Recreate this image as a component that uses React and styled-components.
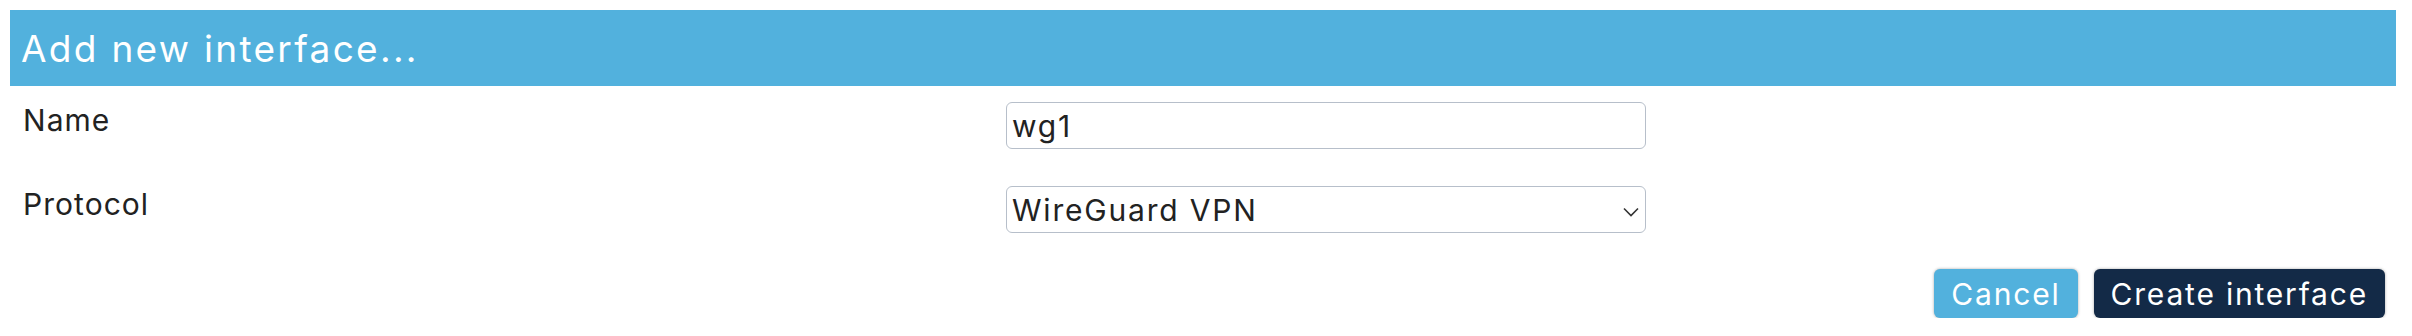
import React from "react";
import styled, { createGlobalStyle } from "styled-components";

const GlobalStyle = createGlobalStyle`
  body {
    margin: 0;
    background: #fff;
    font-family: Inter, "Noto Sans", sans-serif;
    color: #222;
    letter-spacing: 0.065em;
  }
`;

const Page = styled.div`
  padding: 10px 16px 0 10px;
`;

const Header = styled.h2`
  margin: 0;
  height: 76px;
  display: flex;
  align-items: center;
  padding-left: 11px;
  background: #52b1dd;
  color: #fff;
  font-size: 37px;
  font-weight: 400;
  letter-spacing: 0.062em;
`;

const Form = styled.div`
  display: flex;
  flex-direction: column;
  gap: 37px;
  padding-top: 16px;
`;

const Row = styled.div`
  display: grid;
  grid-template-columns: 996px 640px;
  align-items: start;
`;

const Label = styled.label`
  padding: 0 0 0 13px;
  font-size: 30px;
  line-height: 36px;
  color: #222;
`;

const fieldBase = `
  box-sizing: border-box;
  width: 640px;
  height: 47px;
  margin: 0;
  padding: 0 5px;
  border: 1px solid #b7bfca;
  border-radius: 6px;
  background: #fff;
  font-family: Inter, "Noto Sans", sans-serif;
  font-size: 30px;
  letter-spacing: 0.06em;
  color: #222;
  outline: none;
`;

const TextInput = styled.input`
  ${fieldBase}
`;

const SelectWrap = styled.div`
  position: relative;
  width: 640px;
`;

const Select = styled.select`
  ${fieldBase}
  appearance: none;
  -webkit-appearance: none;
  padding-right: 36px;
`;

const Chevron = styled.svg`
  position: absolute;
  right: 7px;
  top: 21px;
  width: 16px;
  height: 10px;
  pointer-events: none;
`;

const Actions = styled.div`
  display: flex;
  justify-content: flex-end;
  gap: 16px;
  padding: 36px 11px 0 0;
`;

const Button = styled.button`
  height: 49px;
  padding: 0 17px;
  border: none;
  border-radius: 6px;
  background: ${(p) => (p.$primary ? "#132a47" : "#52b1dd")};
  color: #fff;
  font-family: Inter, "Noto Sans", sans-serif;
  font-size: 30px;
  letter-spacing: 0.06em;
  box-shadow: 0 0 3px rgba(0, 0, 0, 0.35);
  cursor: pointer;
`;

export default function App() {
  return (
    <>
      <GlobalStyle />
      <Page>
        <Header>Add new interface...</Header>
        <Form>
          <Row>
            <Label>Name</Label>
            <TextInput defaultValue="wg1" />
          </Row>
          <Row>
            <Label>Protocol</Label>
            <SelectWrap>
              <Select defaultValue="wireguard">
                <option value="wireguard">WireGuard VPN</option>
              </Select>
              <Chevron viewBox="0 0 16 10">
                <path d="M1 1.5 L8 8.5 L15 1.5" fill="none" stroke="#333" strokeWidth="1.6" />
              </Chevron>
            </SelectWrap>
          </Row>
        </Form>
        <Actions>
          <Button>Cancel</Button>
          <Button $primary>Create interface</Button>
        </Actions>
      </Page>
    </>
  );
}
